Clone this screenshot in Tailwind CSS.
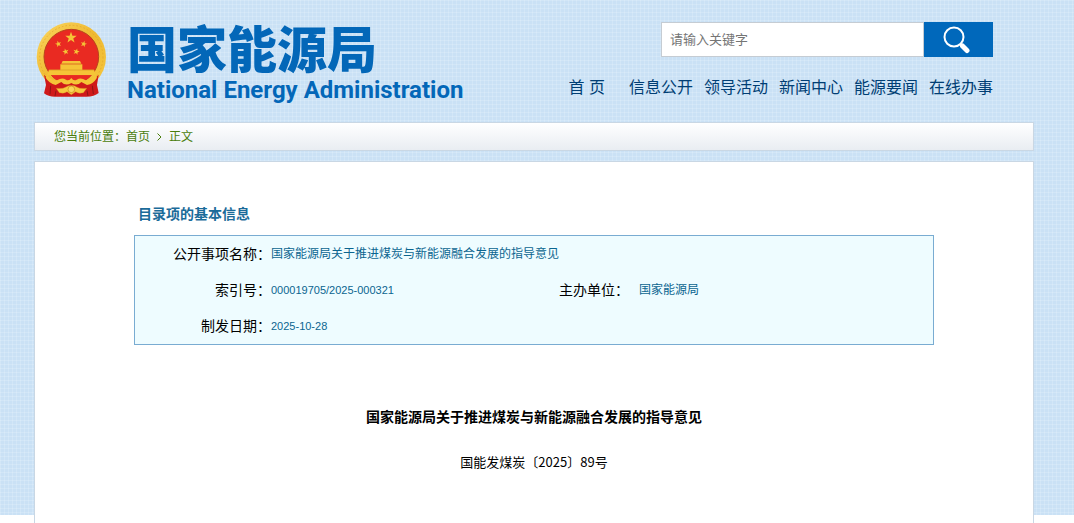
<!DOCTYPE html>
<html lang="zh-CN">
  <head>
    <meta charset="UTF-8">
    <meta name="viewport" content="width=device-width, initial-scale=1">
    <title>国家能源局关于推进煤炭与新能源融合发展的指导意见</title>
    <script src="https://cdn.jsdelivr.net/npm/@tailwindcss/browser@4"></script>
  </head>
  <body class="relative bg-white text-black font-['Liberation_Sans','Noto_Sans_CJK_SC',sans-serif]">
    <!-- checked page backdrop -->
    <div class="absolute inset-x-0 top-0 -z-10 h-[515px] bg-[#cae1f5] bg-[linear-gradient(#ffffff28_1px,transparent_1px),linear-gradient(90deg,#ffffff28_1px,transparent_1px)] bg-[size:4px_4px]"></div>

    <div class="pl-[34px] pr-[40px]">
      <header class="flex justify-between pt-[22px] h-[122px]">
        <a href="#" class="flex">
          <svg class="w-[71px] h-[75px] ml-[2px]" viewBox="18 22 213 225" aria-hidden="true">
            <defs>
              <linearGradient id="gold" x1="0" y1="0" x2="1" y2="1">
                <stop offset="0" stop-color="#fbd760"/>
                <stop offset=".5" stop-color="#efb931"/>
                <stop offset="1" stop-color="#f6c840"/>
              </linearGradient>
              <path id="star" d="M0-10 2.4-3.2 9.5-3.1 3.8 1.2 5.9 8.1 0 4 -5.9 8.1 -3.8 1.2 -9.5-3.1 -2.4-3.2Z"/>
            </defs>
            <circle cx="124" cy="127" r="104" fill="url(#gold)"/>
            <circle cx="124" cy="127" r="95" fill="none" stroke="#dfa127" stroke-width="2" stroke-dasharray="5 6"/>
            <circle cx="124" cy="126" r="82" fill="#e92a22" stroke="#b8421c" stroke-width="3"/>
            <g fill="#f5c437">
              <use href="#star" transform="translate(123 69) scale(1.8)"/>
              <use href="#star" transform="translate(85 88) rotate(-15)"/>
              <use href="#star" transform="translate(161 88) rotate(15)"/>
              <use href="#star" transform="translate(107 111) rotate(-15)"/>
              <use href="#star" transform="translate(139 111) rotate(15)"/>
              <path d="M98 139H150L154 147H94ZM91 149H157V165H192L198 182H51L57 165H91Z"/>
            </g>
            <path d="M94 148H154M57 166H192" stroke="#cf8b1c" stroke-width="1.500" fill="none"/>
            <!-- ribbon and gear below the gate -->
            <path d="M42 180 58 196 80 204 99 196 124 204 150 196 169 204 190 196 206 180 201 211 206 235Q193 246 169 246H78Q56 247 42 236L48 211Z" fill="#cf191a"/>
            <path d="M64 182H184Q176 193 167 197 153 187 140 195 131 200 124 190 117 200 108 195 96 187 81 197 70 193 64 182Z" fill="#e92a22"/>
            <path d="M51 180Q64 199 81 197 96 187 108 195 117 200 124 190 131 200 140 195 153 187 167 197 185 199 197 180L201 189Q190 208 171 211L154 202Q141 216 124 205 107 216 94 202L77 211Q57 206 47 189Z" fill="#f5c437"/>
            <path d="M79 221Q99 223 108 217 116 211 124 213 133 211 140 217 149 223 170 221L160 234Q145 238 137 231L124 240 111 231Q103 238 88 234Z" fill="#f7c83d" stroke="#d99722"/>
            <circle cx="124" cy="224" r="10" fill="#f9d65a" stroke="#c98319" stroke-width="2"/>
            <path d="M62 213 60 239M187 213 190 238M78 228 75 244M171 228 174 244" stroke="#8f1515" stroke-width="3" fill="none"/>
          </svg>
          <div class="ml-[20px] text-[#0367b8] whitespace-nowrap">
            <div class="text-[50px] leading-[48px] font-black font-['Noto_Sans_CJK_SC',sans-serif]">国家能源局</div>
            <div class="mt-[7px] text-[24px] leading-[26px] font-bold font-[Roboto,sans-serif]">National Energy Administration</div>
          </div>
        </a>

        <div class="mr-[41px] flex flex-col items-end">
          <form class="flex h-[35px]" onsubmit="return false">
            <input type="text" aria-label="请输入关键字" placeholder="请输入关键字" class="w-[263px] bg-white border border-[#c5ccd3] px-2 text-[13px] placeholder:text-[#757575] outline-none">
            <button type="submit" aria-label="搜索" class="w-[69px] bg-[#0068bb] flex items-center justify-center">
              <svg class="w-[28px] h-[28px] mr-[6px]" viewBox="0 0 28 28" fill="none" stroke="#fff" aria-hidden="true">
                <circle cx="12" cy="11" r="9.500" stroke-width="2"/>
                <path d="M18 18 20 20" stroke-width="2"/>
                <path d="M20.500 20 25 24.500" stroke-width="5" stroke-linecap="round"/>
              </svg>
            </button>
          </form>
          <nav class="mt-[19px] flex gap-[11px] text-[16px] leading-6 text-[#003e74] whitespace-nowrap">
            <a href="#" class="mr-[13px]">首 页</a>
            <a href="#">信息公开</a>
            <a href="#">领导活动</a>
            <a href="#">新闻中心</a>
            <a href="#">能源要闻</a>
            <a href="#">在线办事</a>
          </nav>
        </div>
      </header>

      <div class="h-[29px] flex items-center border border-[#c9d7e4] bg-linear-to-b from-white to-[#e9edf2] pl-[19px] text-[12px] text-[#4a7d0c]">
        <span>您当前位置：</span>
        <a href="#">首页</a>
        <svg class="w-[5px] h-[8px] mx-[7px]" viewBox="0 0 5 8" fill="none" stroke="currentColor" aria-hidden="true"><path d="M.5.5 4 4 .5 7.500"/></svg>
        <span>正文</span>
      </div>

      <main class="mt-[10px] min-h-[362px] border border-b-0 border-[#c9d7e4] bg-white px-[99px] pt-[42px]">
        <h2 class="pl-[4px] text-[14px] leading-5 font-bold text-[#1b6b99]">目录项的基本信息</h2>
        <table class="mt-[11px] w-full table-fixed border-separate border-spacing-0 border border-[#79acd2] bg-[#eefcff] text-left text-[12px] text-[#0b6590]">
          <colgroup>
            <col class="w-[136px]">
            <col class="w-[288px]">
            <col class="w-[80px]">
            <col>
          </colgroup>
          <tbody>
            <tr class="h-9">
              <th scope="row" class="text-right text-[14px] font-normal text-black">公开事项名称：</th>
              <td colspan="3">国家能源局关于推进煤炭与新能源融合发展的指导意见</td>
            </tr>
            <tr class="h-9">
              <th scope="row" class="text-right text-[14px] font-normal text-black">索引号：</th>
              <td class="text-[11px]">000019705/2025-000321</td>
              <th scope="row" class="text-[14px] font-normal text-black">主办单位：</th>
              <td>国家能源局</td>
            </tr>
            <tr class="h-9">
              <th scope="row" class="text-right text-[14px] font-normal text-black">制发日期：</th>
              <td colspan="3" class="text-[11px]">2025-10-28</td>
            </tr>
          </tbody>
        </table>

        <h1 class="mt-[62px] text-center text-[14px] leading-5 font-bold">国家能源局关于推进煤炭与新能源融合发展的指导意见</h1>
        <p class="mt-[25px] text-center text-[13px] leading-5 font-['Noto_Sans_CJK_SC',sans-serif]">国能发煤炭〔2025〕89号</p>
      </main>
    </div>
  </body>
</html>
